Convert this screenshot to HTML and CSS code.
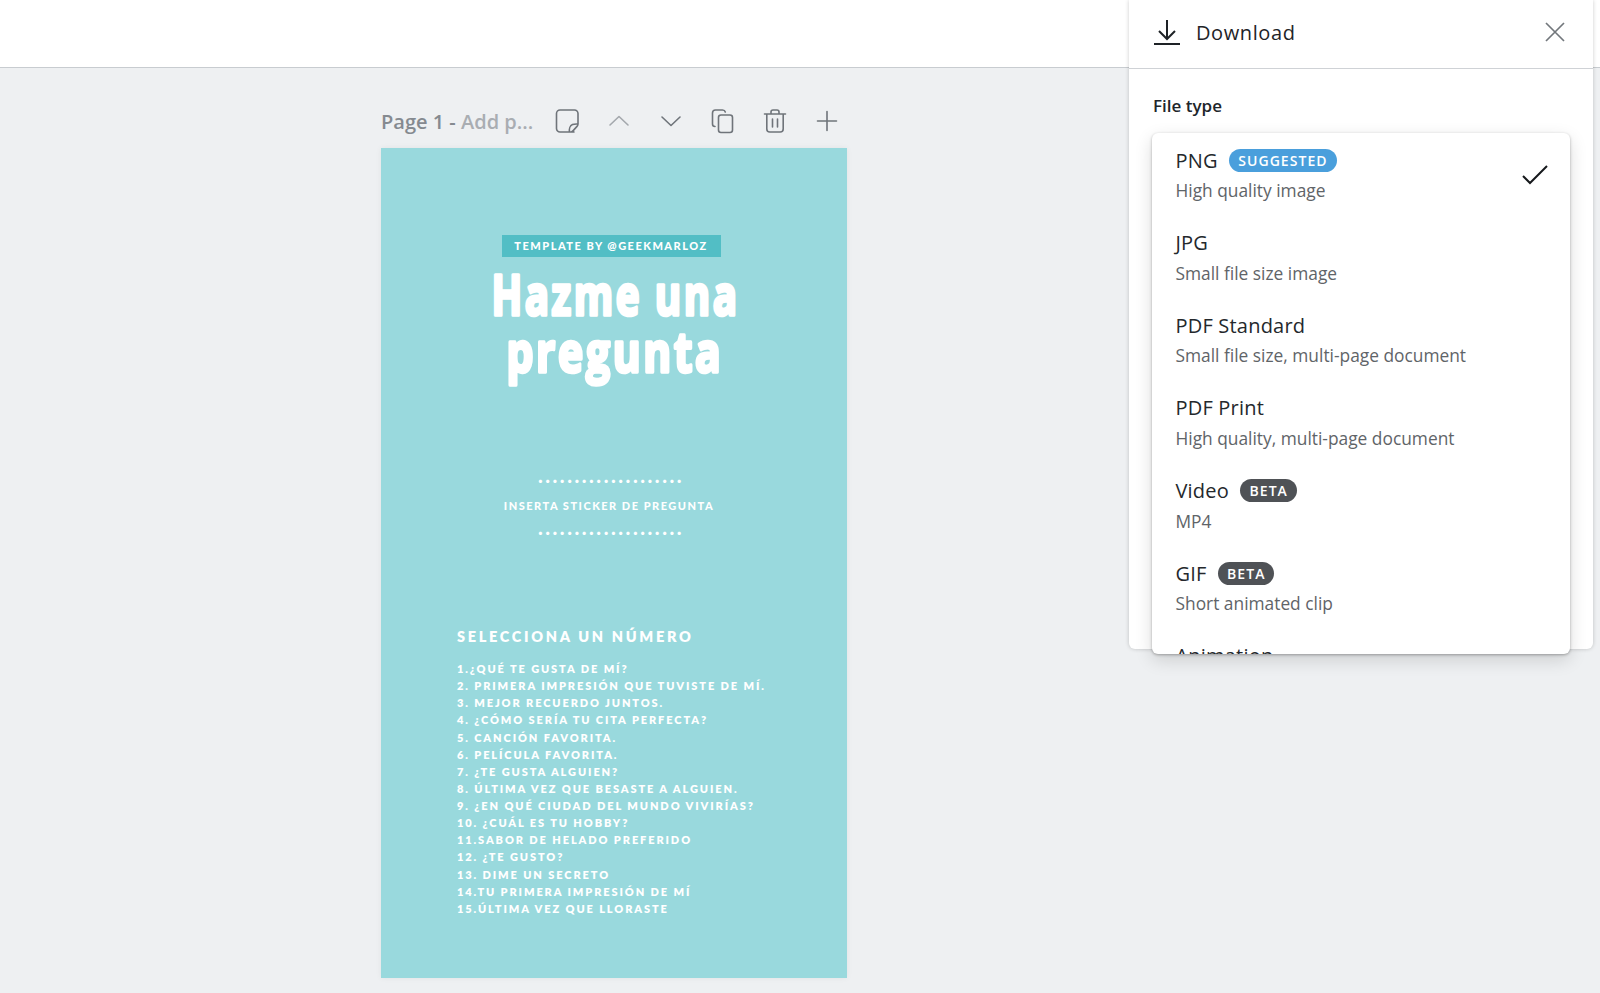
FILE: index.html
```html
<!DOCTYPE html>
<html lang="en">
<head>
<meta charset="utf-8">
<title>Download</title>
<link rel="stylesheet" href="styles.css">
</head>
<body>
<header class="topbar"></header>
<main class="stage">
  <div class="page-bar">
    <div class="page-title"><span class="page-num">Page 1 -</span> <span class="page-add">Add p...</span></div>
    <div class="page-tools">
      <svg class="tool" viewBox="0 0 26 26"><path d="M20 24H6a3.500 3.500 0 0 1-3.500-3.500V5.500A3.500 3.500 0 0 1 6 2h14.500A3.500 3.500 0 0 1 24 5.500V16c0 1-.4 1.700-1 2.400l-3.800 4.200c-.7.800-1.300 1.400-2.200 1.400M15.500 24c-.5-3 .5-6.500 3-7.500 1.500-.6 3.500-.6 5.500-.5" /></svg>
      <svg class="tool light" viewBox="0 0 26 26"><path d="M4 17l9-8.500 9 8.500"/></svg>
      <svg class="tool" viewBox="0 0 26 26"><path d="M4 9l9 8.500L22 9"/></svg>
      <svg class="tool" viewBox="0 0 26 26"><path d="M5 18.500c-1.500 0-2.500-1-2.500-2.500V5A3 3 0 0 1 5.500 2h7c1.500 0 2.500.8 2.800 2"/><rect x="8.500" y="7" width="14" height="17.500" rx="2.500"/></svg>
      <svg class="tool" viewBox="0 0 26 26"><path d="M2.500 6h21M9 6V4a2 2 0 0 1 2-2h4a2 2 0 0 1 2 2v2M4.800 6v15a3 3 0 0 0 3 3h10.400a3 3 0 0 0 3-3V6M10.500 11v8M15.500 11v8"/></svg>
      <svg class="tool" viewBox="0 0 26 26"><path d="M13 3.500v19M3.500 13h19"/></svg>
    </div>
  </div>
  <article class="design">
    <div class="tag">TEMPLATE BY @GEEKMARLOZ</div>
    <h1 class="headline">
      <svg class="headline-svg" viewBox="0 0 466 116">
        <text x="110.500" y="49.500" textLength="248" lengthAdjust="spacingAndGlyphs">Hazme una</text>
        <text x="125.500" y="107" textLength="217" lengthAdjust="spacingAndGlyphs">pregunta</text>
      </svg>
    </h1>
    <div class="dots">....................</div>
    <div class="sticker">INSERTA STICKER DE PREGUNTA</div>
    <div class="dots dots-low">....................</div>
    <section class="numbers">
      <h2 class="numbers-title">SELECCIONA UN NÚMERO</h2>
      <ol class="questions">
        <li>1.¿QUÉ TE GUSTA DE MÍ?</li>
        <li>2. PRIMERA IMPRESIÓN QUE TUVISTE DE MÍ.</li>
        <li>3. MEJOR RECUERDO JUNTOS.</li>
        <li>4. ¿CÓMO SERÍA TU CITA PERFECTA?</li>
        <li>5. CANCIÓN FAVORITA.</li>
        <li>6. PELÍCULA FAVORITA.</li>
        <li>7. ¿TE GUSTA ALGUIEN?</li>
        <li>8. ÚLTIMA VEZ QUE BESASTE A ALGUIEN.</li>
        <li>9. ¿EN QUÉ CIUDAD DEL MUNDO VIVIRÍAS?</li>
        <li>10. ¿CUÁL ES TU HOBBY?</li>
        <li>11.SABOR DE HELADO PREFERIDO</li>
        <li>12. ¿TE GUSTO?</li>
        <li>13. DIME UN SECRETO</li>
        <li>14.TU PRIMERA IMPRESIÓN DE MÍ</li>
        <li>15.ÚLTIMA VEZ QUE LLORASTE</li>
      </ol>
    </section>
  </article>
</main>
<aside class="panel">
  <div class="panel-head">
    <svg class="dl-icon" viewBox="0 0 28 26"><path d="M14 1v18M6 12l8 8 8-8M1 25h26"/></svg>
    <span class="panel-title">Download</span>
    <svg class="close-icon" viewBox="0 0 20 20"><path d="M1 1l18 18M19 1L1 19"/></svg>
  </div>
  <div class="panel-label">File type</div>
</aside>
<div class="dropdown">
  <div class="option"><div class="opt-name">PNG <span class="badge blue">SUGGESTED</span></div><div class="opt-desc">High quality image</div>
    <svg class="check" viewBox="0 0 26 20"><path d="M1 11l7 7L25 1"/></svg></div>
  <div class="option"><div class="opt-name">JPG</div><div class="opt-desc">Small file size image</div></div>
  <div class="option"><div class="opt-name">PDF Standard</div><div class="opt-desc">Small file size, multi-page document</div></div>
  <div class="option"><div class="opt-name">PDF Print</div><div class="opt-desc">High quality, multi-page document</div></div>
  <div class="option"><div class="opt-name">Video <span class="badge dark">BETA</span></div><div class="opt-desc">MP4</div></div>
  <div class="option"><div class="opt-name">GIF <span class="badge dark">BETA</span></div><div class="opt-desc">Short animated clip</div></div>
  <div class="option"><div class="opt-name">Animation</div></div>
</div>
</body>
</html>
```
FILE: styles.css
```css
* { box-sizing: border-box; }
html, body { margin: 0; height: 100%; overflow: hidden; }
body { background: #eef0f2; font-family: "Open Sans", sans-serif; }
.topbar { height: 68px; background: #fff; border-bottom: 1px solid #c8ccd0; }
.stage { padding-left: 381px; }
.page-bar { width: 466px; height: 80px; display: flex; align-items: center; padding-top: 26px; justify-content: space-between; }
.page-title { font-size: 20px; font-weight: 600; white-space: nowrap; }
.page-num { color: #858a90; }
.page-add { color: #a9adb2; }
.page-tools { display: flex; gap: 26px; margin-right: 7px; }
.tool { width: 26px; height: 26px; fill: none; stroke: #6f747a; stroke-width: 1.600; stroke-linecap: round; stroke-linejoin: round; }
.tool.light { stroke: #a4a8ad; }
.design { width: 466px; height: 830px; background: #99d9dd; color: #fff; box-shadow: 0 0 6px rgba(0,0,0,.06); padding-top: 87px; display: flex; flex-direction: column; align-items: center; font-family: "Lato", sans-serif; font-weight: 900; }
.tag { width: 219px; height: 22px; margin-left: -6px; background: #52bec5; font-size: 11px; letter-spacing: 1.500px; line-height: 22px; text-align: center; white-space: nowrap; }
.headline { margin: 8px 0 0; width: 466px; height: 116px; font-size: 56px; line-height: 58px; font-weight: 700; }
.headline-svg { display: block; width: 466px; height: 116px; overflow: visible; fill: #fff; stroke: #fff; stroke-width: 3.500; stroke-linejoin: round; paint-order: stroke; font-family: "Open Sans", sans-serif; font-weight: 700; font-size: 56px; letter-spacing: 3.500px; }
.dots { margin-top: 87px; margin-left: -6px; font-size: 20px; line-height: 14px; height: 14px; letter-spacing: 2.550px; font-weight: 900; white-space: nowrap; }
.sticker { margin-top: 17px; margin-left: -10px; font-size: 11px; line-height: 14px; letter-spacing: 1.500px; height: 14px; white-space: nowrap; }
.dots-low { margin-top: 7px; }
.numbers { align-self: flex-start; margin-top: 94px; padding-left: 76px; }
.numbers-title { margin: 0; font-size: 14.500px; line-height: 18px; letter-spacing: 2.700px; font-weight: 800; white-space: nowrap; }
.questions { list-style: none; margin: 14px 0 0; padding: 0; font-size: 11px; line-height: 17.130px; letter-spacing: 1.900px; font-weight: 800; white-space: nowrap; }
.panel { position: absolute; left: 1129px; top: 0; width: 464px; height: 649px; background: #fff; border-radius: 0 0 6px 6px; box-shadow: 0 0 4px rgba(0,0,0,.2); }
.panel-head { height: 69px; display: flex; align-items: center; padding: 0 28px 4px 24px; border-bottom: 1px solid #cfd2d6; }
.dl-icon { width: 28px; height: 26px; fill: none; stroke: #1e2226; stroke-width: 2; margin-right: 15px; }
.panel-title { font-size: 20px; font-weight: 500; color: #1f2428; letter-spacing: .6px; flex: 1; }
.close-icon { width: 20px; height: 20px; fill: none; stroke: #72777c; stroke-width: 1.700; }
.panel-label { margin: 26px 0 0 24px; font-size: 17px; line-height: 22px; font-weight: 600; color: #20252a; }
.dropdown { position: absolute; left: 1152px; top: 133px; width: 418px; height: 521px; overflow: hidden; background: #fff; border-radius: 6px; box-shadow: 0 1px 3px rgba(0,0,0,.3), 0 6px 18px rgba(0,0,0,.14); }
.option { position: relative; height: 82.650px; padding: 13px 24px 0 23.500px; }
.opt-name { display: flex; align-items: center; height: 28px; font-size: 20px; color: #24282c; letter-spacing: .2px; gap: 11.500px; }
.opt-desc { margin-top: 4px; font-size: 17.350px; line-height: 24px; color: #5f6468; }
.badge { height: 23px; border-radius: 12px; color: #fff; font-size: 14px; font-weight: 600; line-height: 23px; padding: 0 9px; letter-spacing: 1.050px; }
.blue { background: #4a9fdc; }
.dark { background: #4f5256; }
.check { position: absolute; right: 22px; top: 32px; width: 26px; height: 20px; fill: none; stroke: #16191c; stroke-width: 2; }
```
